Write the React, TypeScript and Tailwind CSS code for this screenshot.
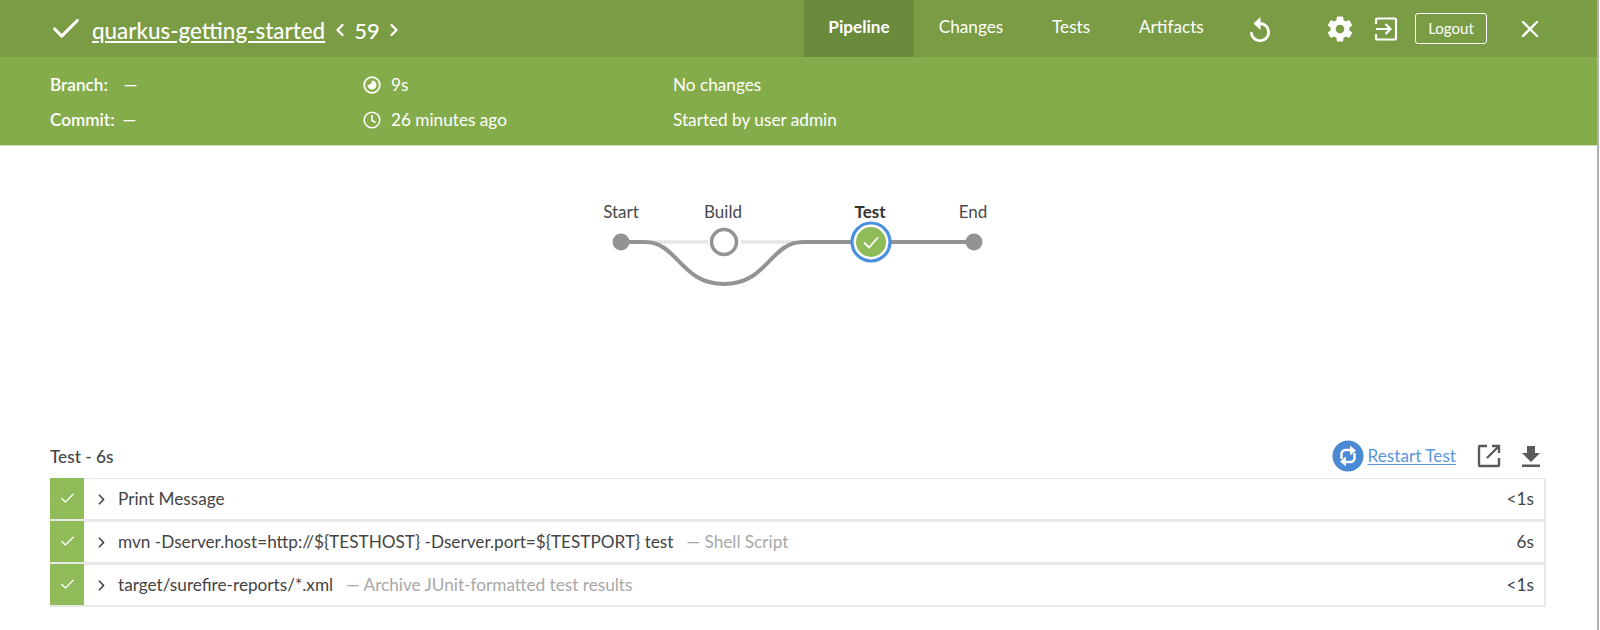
import React from 'react';
import { Check, ChevronLeft, ChevronRight, X } from 'lucide-react';

interface StepItem {
  title: string;
  detail?: string;
  duration: string;
}

const steps: StepItem[] = [
  { title: 'Print Message', duration: '<1s' },
  { title: 'mvn -Dserver.host=http://${TESTHOST} -Dserver.port=${TESTPORT} test', detail: '— Shell Script', duration: '6s' },
  { title: 'target/surefire-reports/*.xml', detail: '— Archive JUnit-formatted test results', duration: '<1s' },
];

const GearIcon = () => (
  <svg width="30" height="30" viewBox="0 0 24 24" fill="white">
    <path d="M19.43 12.98c.04-.32.07-.64.07-.98s-.03-.66-.07-.98l2.11-1.65c.19-.15.24-.42.12-.64l-2-3.46c-.12-.22-.39-.3-.61-.22l-2.49 1c-.52-.4-1.08-.73-1.69-.98l-.38-2.65C14.46 2.18 14.25 2 14 2h-4c-.25 0-.46.18-.49.42l-.38 2.65c-.61.25-1.17.59-1.69.98l-2.49-1c-.23-.09-.49 0-.61.22l-2 3.46c-.13.22-.07.49.12.64l2.11 1.65c-.04.32-.07.65-.07.98s.03.66.07.98l-2.11 1.65c-.19.15-.24.42-.12.64l2 3.46c.12.22.39.3.61.22l2.49-1c.52.4 1.08.73 1.69.98l.38 2.65c.03.24.24.42.49.42h4c.25 0 .46-.18.49-.42l.38-2.65c.61-.25 1.17-.59 1.69-.98l2.49 1c.23.09.49 0 .61-.22l2-3.46c.12-.22.07-.49-.12-.64l-2.11-1.65zM12 15.5c-1.93 0-3.5-1.57-3.5-3.5s1.57-3.5 3.5-3.5 3.5 1.57 3.5 3.5-1.57 3.5-3.5 3.5z" />
  </svg>
);

const ExitIcon = () => (
  <svg width="24" height="24" viewBox="0 0 24 24" fill="none" stroke="white" strokeWidth="2.200">
    <path d="M2 7V3a1.500 1.500 0 0 1 1.500-1.500h17A1.500 1.500 0 0 1 22 3v18a1.500 1.500 0 0 1-1.500 1.500h-17A1.500 1.500 0 0 1 2 21v-4" />
    <path d="M2 12h14M11.500 7l5 5-5 5" />
  </svg>
);

const ReplayIcon = () => (
  <svg width="24" height="30" viewBox="0 0 24 30" fill="none">
    <path d="M12 9.500a8.700 8.700 0 1 1-8.700 8.700" stroke="white" strokeWidth="2.800" />
    <path d="M12.500 3v13L5.500 9.500z" fill="white" />
  </svg>
);

const PipelineGraph = () => (
  <svg width="420" height="110" viewBox="0 0 420 110" className="block">
    <path d="M31 52H118M151 52H205" stroke="#e6e6e6" strokeWidth="3.500" fill="none" />
    <path d="M31 52H55C88 52 90 94 134 94C178 94 180 52 213 52H384" stroke="#949393" strokeWidth="4" fill="none" />
    <circle cx="31" cy="52" r="8.500" fill="#949393" />
    <circle cx="134" cy="52" r="12.500" fill="white" stroke="#949393" strokeWidth="3.500" />
    <circle cx="281" cy="52" r="19" fill="white" stroke="#4a90e2" strokeWidth="3.200" />
    <circle cx="281" cy="52" r="15" fill="#8fbb58" />
    <path d="M274 52.500l5 5 9-10" stroke="white" strokeWidth="1.800" fill="none" />
    <circle cx="384" cy="52" r="8.500" fill="#949393" />
    <text x="31" y="28" textAnchor="middle" fontSize="17" fill="#4a4a4a">Start</text>
    <text x="133" y="28" textAnchor="middle" fontSize="17" fill="#4a4a4a">Build</text>
    <text x="280" y="28" textAnchor="middle" fontSize="17" fontWeight="700" fill="#333">Test</text>
    <text x="383" y="28" textAnchor="middle" fontSize="17" fill="#4a4a4a">End</text>
  </svg>
);

const App: React.FC = () => {
  return (
    <div className="h-[630px] w-[1600px] overflow-hidden bg-white font-['Lato',sans-serif] text-[#444]">
      <div className="h-full w-[1599px] border-r-2 border-[#b0b0b0]">
        <header className="flex h-[57px] items-center bg-[#7a9c45] pr-[53px] pl-[50px] text-white">
          <Check size={34} strokeWidth={2.200} className="mr-[9px] -ml-[1px] shrink-0" />
          <div className="mt-[4px] flex items-center">
            <a className="text-[22.4px] font-medium underline underline-offset-2" href="#">quarkus-getting-started</a>
            <ChevronLeft size={20} strokeWidth={2.800} className="ml-[5px]" />
            <span className="ml-[4px] text-[22px] font-medium">59</span>
            <ChevronRight size={20} strokeWidth={2.800} className="ml-[4px]" />
          </div>
          <nav className="ml-auto flex h-full items-center text-[17.2px]">
            <span className="flex h-full w-[110px] items-center justify-center bg-[#6a8a3c] pb-[3px] font-bold">Pipeline</span>
            <span className="ml-[24px] w-[66px] pb-[3px] text-center">Changes</span>
            <span className="ml-[48px] w-[38px] pb-[3px] text-center">Tests</span>
            <span className="ml-[49px] w-[64px] pb-[3px] text-center">Artifacts</span>
          </nav>
          <div className="ml-[45px] flex items-center"><ReplayIcon /></div>
          <div className="ml-[53px] flex items-center"><GearIcon /></div>
          <div className="ml-[19px] flex items-center"><ExitIcon /></div>
          <button className="ml-[17px] h-[31px] w-[72px] rounded-[3px] border border-white text-[15px]">Logout</button>
          <X size={28} strokeWidth={2} className="ml-[29px]" />
        </header>

        <div className="grid h-[89px] grid-cols-[313px_310px_1fr] grid-rows-2 items-center border-b border-[#cfe0b8] bg-[#85ac4a] pt-[11px] pb-[8px] pl-[50px] text-[17.2px] text-white">
          <div className="font-semibold">Branch:<span className="ml-[16px]">—</span></div>
          <div className="flex items-center gap-[10px]">
            <svg width="18" height="18" viewBox="0 0 18 18">
              <circle cx="9" cy="9" r="7.800" fill="none" stroke="white" strokeWidth="1.800" />
              <path d="M9 4.500a4.500 4.500 0 1 1-4.500 4.500c2.500 0 4.500-2 4.500-4.500z" fill="white" />
            </svg>
            <span>9s</span>
          </div>
          <div>No changes</div>
          <div className="font-semibold">Commit:<span className="ml-[8px]">—</span></div>
          <div className="flex items-center gap-[10px]">
            <svg width="18" height="18" viewBox="0 0 18 18" fill="none" stroke="white" strokeWidth="1.600">
              <circle cx="9" cy="9" r="7.800" />
              <path d="M9 4v5.500l3.500 2" />
            </svg>
            <span>26 minutes ago</span>
          </div>
          <div>Started by user admin</div>
        </div>

        <div className="ml-[590px] mt-[44px] h-[110px] w-[420px]">
          <PipelineGraph />
        </div>

        <div className="mx-[50px] mt-[139px] w-[1496px]">
          <div className="flex h-[36px] items-center justify-between">
            <span className="text-[17.2px] font-medium">Test - 6s</span>
            <div className="mb-[3px] flex items-center">
              <svg width="32" height="32" viewBox="0 0 32 32">
                <circle cx="16" cy="16" r="15.500" fill="#4a8ad4" />
                <path d="M9.500 19V14a4 4 0 0 1 4-4h6M22.500 13v5a4 4 0 0 1-4 4h-6" stroke="white" strokeWidth="2.600" fill="none" />
                <path d="M18 5.500l6 5-6 5zM14 16.500l-6 5 6 5z" fill="white" />
              </svg>
              <a href="#" className="ml-[4px] text-[17.2px] text-[#5a96de] underline underline-offset-2">Restart Test</a>
              <svg width="24" height="24" viewBox="0 0 24 24" fill="none" stroke="#5a5a5a" strokeWidth="2.400" className="ml-[21px]">
                <path d="M10 2H3a1 1 0 0 0-1 1v18a1 1 0 0 0 1 1h18a1 1 0 0 0 1-1v-7M15 2h7v7M22 2 10 14" />
              </svg>
              <svg width="20" height="24" viewBox="0 0 20 24" fill="#5a5a5a" className="mr-[5px] ml-[20px]">
                <path d="M6 2h8v7h5l-9 9-9-9h5zM1 20.500h18v2.500H1z" />
              </svg>
            </div>
          </div>
          <div className="mt-[3px] flex flex-col">
            {steps.map((step) => (
              <div key={step.title} className="flex h-[43px] items-stretch border-b-2 border-[#e8e8e8]">
                <div className="flex w-[34px] items-center justify-center bg-[#8fbb58] text-white">
                  <Check size={17} strokeWidth={1.800} />
                </div>
                <div className="flex flex-1 items-center border-t border-r-2 border-[#e8e8e8] px-[10px] text-[17.2px]">
                  <ChevronRight size={17} strokeWidth={2.400} className="mr-[8px] -ml-[1px]" />
                  <span>{step.title}</span>
                  {step.detail && <span className="ml-[13px] text-[#a8a8a8]">{step.detail}</span>}
                  <span className="ml-auto">{step.duration}</span>
                </div>
              </div>
            ))}
          </div>
        </div>
      </div>
    </div>
  );
};

export default App;
